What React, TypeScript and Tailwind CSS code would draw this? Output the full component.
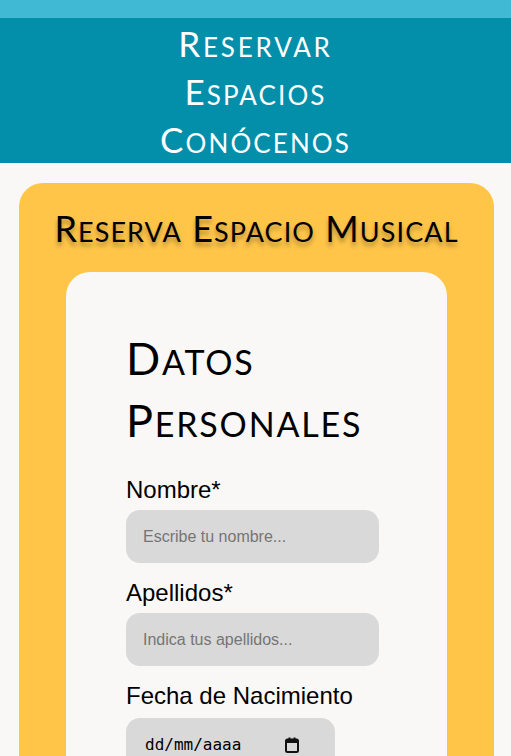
const heading = "font-['Lato','Open_Sans',sans-serif]";

// first letter of each word at full size, the rest as slightly enlarged small caps
const SmallCaps = ({ text }: { text: string }) => {
  return (
    <>
      {text.split(" ").map((word, i) => (
        <span key={i}>
          {i > 0 && " "}
          {word[0]}
          <span className="text-[1.08em] [font-variant:small-caps]">{word.slice(1)}</span>
        </span>
      ))}
    </>
  );
};

const Field = ({ label, placeholder }: { label: string; placeholder: string }) => {
  return (
    <div className="flex flex-col">
      <label className="text-[24px] leading-[28px] text-black mb-[6px]">{label}</label>
      <input
        type="text"
        placeholder={placeholder}
        className="w-[253px] h-[53px] rounded-[14px] bg-[#d9d9d9] pl-[17px] text-[16px] text-black placeholder:text-[#757575] outline-none"
      />
    </div>
  );
};

const App = () => {
  return (
    <div className="min-h-screen bg-[#f9f8f7] font-['Liberation_Sans',Arial,sans-serif]">
      <div className="h-[18px] bg-[#40b9d4]" />
      <header className="bg-[#038ea9] h-[145px] flex flex-col items-center justify-center">
        <nav className={`flex flex-col items-center text-white text-[35px] leading-[47px] tracking-[0.06em] ${heading}`}>
          <a href="#" className="tracking-[0.08em]"><SmallCaps text="Reservar" /></a>
          <a href="#"><SmallCaps text="Espacios" /></a>
          <a href="#"><SmallCaps text="Conócenos" /></a>
        </nav>
      </header>
      <main className="ml-[19px] mr-[17px] pt-[20px]">
        <section className="bg-[#ffc548] rounded-t-[24px] pt-[22px] px-[47px] pb-10">
          <h1
            className={`-mx-[47px] text-center text-black text-[36px] leading-[45px] mb-[21px] tracking-[0.03em] whitespace-nowrap [text-shadow:0_4px_4px_rgba(0,0,0,0.3)] ${heading}`}
          >
            <SmallCaps text="Reserva Espacio Musical" />
          </h1>
          <div className="bg-[#f9f8f7] rounded-t-[24px] pl-[60px] pr-6 pt-[54px] pb-10">
            <h2 className={`text-black text-[45px] leading-[60px] mb-[26px] tracking-[0.04em] ${heading}`}>
              <SmallCaps text="Datos" />
              <br />
              <SmallCaps text="Personales" />
            </h2>
            <div className="flex flex-col gap-4">
              <Field label="Nombre*" placeholder="Escribe tu nombre..." />
              <Field label="Apellidos*" placeholder="Indica tus apellidos..." />
              <div className="flex flex-col">
                <label className="text-[24px] leading-[28px] text-black mb-[8px]">Fecha de Nacimiento</label>
                <div className="w-[209px] h-[53px] rounded-[14px] bg-[#d9d9d9] pl-[19px] pr-[36px] flex items-center justify-between">
                  <span className="font-['DejaVu_Sans_Mono',monospace] text-[16px] text-black">dd/mm/aaaa</span>
                  <svg width="14" height="16" viewBox="0 0 14 16" fill="none">
                    <rect x="1" y="2.5" width="12" height="12.5" rx="1.5" stroke="#111" strokeWidth="2" />
                    <rect x="1" y="2.5" width="12" height="3.5" fill="#111" />
                    <rect x="3.5" y="0.5" width="2" height="3" fill="#111" />
                    <rect x="8.5" y="0.5" width="2" height="3" fill="#111" />
                  </svg>
                </div>
              </div>
            </div>
          </div>
        </section>
      </main>
    </div>
  );
};

export default App;
